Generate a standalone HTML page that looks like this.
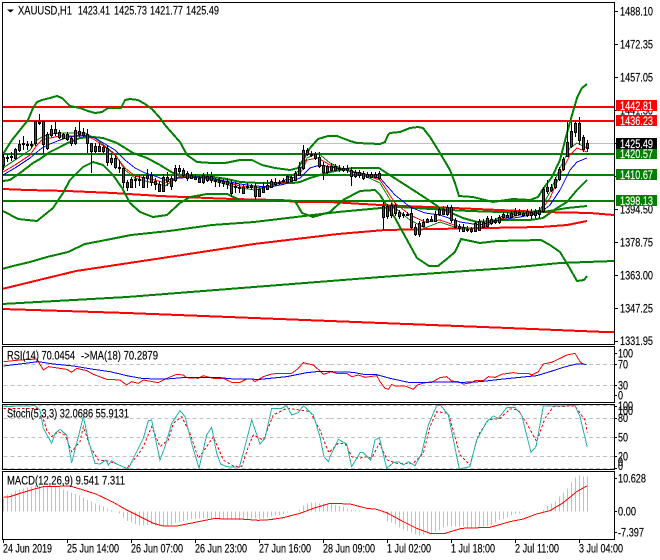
<!DOCTYPE html>
<html><head><meta charset="utf-8"><style>
html,body{margin:0;padding:0;background:#fff;width:660px;height:560px;overflow:hidden}
svg{display:block;font-family:"Liberation Sans",sans-serif;font-size:11.5px}
text{stroke:#000;stroke-width:.15}
.w text{stroke:#fff}
polyline{shape-rendering:crispEdges}
.f{fill:none;stroke:#000;stroke-width:1;shape-rendering:crispEdges}
.g2{fill:none;stroke:#008000;stroke-width:2}
.r2{fill:none;stroke:#f00;stroke-width:2;shape-rendering:crispEdges}
.t{fill:none;stroke-width:1}
.z{fill:none;stroke-width:3}
.d{stroke:#c0c0c0;stroke-width:3;stroke-dasharray:12 9;fill:none;shape-rendering:crispEdges}
</style></head><body>
<svg width="660" height="560" viewBox="0 0 660 560" xmlns="http://www.w3.org/2000/svg">
<rect width="660" height="560" fill="#fff"/>
<defs><clipPath id="m"><rect x="3" y="3" width="611" height="341"/></clipPath></defs>
<g clip-path="url(#m)">
<path d="M3 143.5H614" stroke="#c0c0c0" stroke-width="1" fill="none"/>
<path class="r2" d="M3 107H614M3 121H614"/>
<path class="g2" d="M3 154H614M3 175H614M3 201H614"/>
<polyline class="r2" points="2,309 127,313 254,318 381,323 508,328 605,332 614,332"/>
<polyline class="g2" points="2,304 127,297 254,287 381,277 508,268 560,263 614,261"/>
<polyline class="r2" points="2,289 76,271 169,257 254,244 338,234 385,230 486,228 541,227 567,225 587,221"/>
<polyline class="r2" points="3,189 27,190 67,191 113,193 160,196 207,198 233,199 277,200 297,202 330,202 380,205 477,209 543,212 590,213 614,215"/>
<polyline class="g2" points="2,269 13,266 30,262 47,257 68,252 85,244 106,240 131,235 169,231 212,225 254,222 296,217 338,212 381,208 400,207 430,209 470,211 530,213 543,212 567,208 587,206"/>
<polyline class="g2" points="3,154 12,140 20,130 28,120 33,108 37,102 42,100 50,98 57,96 62,98 70,106 80,108 88,111 95,113 102,112 108,108 115,108 121,108 125,100 130,99 138,100 145,104 152,109 160,118 165,125 172,133 180,142 187,155 197,162 212,163 225,163 240,160 252,160 262,165 275,168 290,170 298,168 303,160 310,148 318,139 328,136 337,136 350,141 357,143 380,144 385,142 388,135 390,133 400,132 410,128 418,127 423,128 430,137 440,153 450,170 455,183 459,196 473,197 493,202 513,199 530,200 538,197 543,189 552,177 560,160 567,133 572,115 577,98 582,88 587,84"/>
<polyline class="g2" points="3,181 10,180 20,173 33,163 40,159 50,152 60,147 70,142 80,138 93,137 103,138 117,143 133,153 147,158 160,165 173,173 187,177 200,177 213,177 227,179 240,182 260,183 280,183 293,183 300,182 310,178 330,172 340,170 353,168 379,168 385,172 410,188 427,199 440,208 463,218 477,222 503,220 530,220 543,218 557,208 567,202 577,190 587,180"/>
<polyline class="g2" points="3,211 18,219 37,221 53,208 63,193 70,180 83,167 93,162 103,165 113,175 122,188 130,203 140,212 153,217 167,215 180,203 190,197 207,194 227,194 240,200 253,201 280,200 295,201 302,213 313,217 330,212 343,200 360,191 375,190 380,195 385,203 395,218 406,238 417,258 429,266 438,266 448,258 455,252 461,239 480,243 497,241 541,240 550,245 560,252 569,267 577,281 584,280 587,276"/>
<polyline class="t" stroke="#008000" points="3,168 15,160 30,150 37,140 42,137 50,134 60,133 72,133 85,133 95,138 105,146 115,154 125,170 135,178 145,181 155,183 165,186 180,176 195,176 210,180 225,184 240,188 255,190 270,186 285,180 300,170 307,158 318,153 330,163 345,170 365,176 380,183 395,208 410,220 425,228 440,222 460,229 480,228 500,217 520,213 540,210 550,192 560,168 570,148 577,143 587,148"/>
<polyline class="t" stroke="#f00" points="3,172 15,165 30,155 37,145 42,140 50,138 60,136 72,136 85,135 95,140 105,147 115,155 125,168 135,176 145,178 155,180 165,183 180,177 195,177 210,179 225,182 240,186 255,188 270,186 285,182 300,174 307,160 318,158 330,165 345,170 365,175 380,180 395,203 410,215 425,222 440,220 460,227 480,229 500,219 520,215 540,212 550,198 560,175 570,155 577,148 587,152"/>
<polyline class="t" stroke="#00f" points="3,175 15,168 30,158 37,152 42,148 50,144 60,140 70,137 80,136 87,136 95,138 105,144 115,150 125,160 135,168 145,173 155,176 165,180 180,178 195,177 210,178 225,181 240,184 255,186 270,187 285,184 300,178 310,168 320,165 330,167 345,170 365,174 380,178 395,195 410,207 425,213 440,215 460,222 480,225 500,220 520,217 540,213 550,205 560,190 570,170 577,162 587,158"/>
<path stroke="#000" stroke-width="1" fill="none" shape-rendering="crispEdges" d="M3.5 154V170M7.5 154V162M11.5 152V161M15.5 148V160M19.5 140V152M23.5 136V150M27.5 141V150M31.5 141V148M35.5 121V146M39.5 114V125M43.5 121V154M47.5 132V150M51.5 125V137M55.5 122V136M59.5 130V139M63.5 133V139M67.5 132V141M71.5 136V146M75.5 127V145M79.5 121V137M83.5 128V137M87.5 129V153M91.5 143V173M95.5 143V153M99.5 143V152M103.5 145V154M107.5 145V166M111.5 153V165M115.5 155V169M119.5 160V173M123.5 168V188M127.5 180V191M131.5 177V188M135.5 176V188M139.5 175V186M143.5 175V187M147.5 169V188M151.5 172V186M155.5 178V190M159.5 181V192M163.5 174V192M167.5 172V186M171.5 176V190M175.5 165V182M179.5 165V174M183.5 168V177M187.5 171V181M191.5 172V179M195.5 174V179M199.5 176V183M203.5 173V184M207.5 172V182M211.5 172V183M215.5 178V187M219.5 177V187M223.5 179V187M227.5 178V189M231.5 180V197M235.5 182V193M239.5 184V193M243.5 185V194M247.5 183V189M251.5 184V190M255.5 183V200M259.5 186V197M263.5 182V193M267.5 180V190M271.5 179V188M275.5 178V186M279.5 180V185M283.5 178V183M287.5 175V183M291.5 175V182M295.5 171V181M299.5 162V176M303.5 145V170M307.5 148V156M311.5 151V157M315.5 152V160M319.5 152V168M323.5 162V180M327.5 165V174M331.5 163V171M335.5 164V171M339.5 165V172M343.5 166V172M347.5 165V173M351.5 167V186M355.5 170V178M359.5 170V178M363.5 171V180M367.5 172V178M371.5 172V178M375.5 172V178M379.5 171V180M383.5 202V230M387.5 204V219M391.5 203V218M395.5 203V216M399.5 210V219M403.5 212V218M407.5 212V216M411.5 207V229M415.5 224V236M419.5 221V237M423.5 219V227M427.5 218V223M431.5 216V222M435.5 211V222M439.5 207V216M443.5 206V215M447.5 205V216M451.5 205V223M455.5 218V229M459.5 224V232M463.5 224V232M467.5 226V232M471.5 227V233M475.5 221V232M479.5 219V231M483.5 219V228M487.5 216V228M491.5 216V225M495.5 218V224M499.5 215V224M503.5 212V219M507.5 212V218M511.5 211V218M515.5 208V216M519.5 209V215M523.5 211V216M527.5 209V217M531.5 209V219M535.5 209V218M539.5 207V218M543.5 187V213M547.5 180V194M551.5 184V192M555.5 177V189M559.5 167V181M563.5 157V171M567.5 122V157M571.5 122V148M575.5 121V137M579.5 117V145M583.5 135V152M587.5 140V152"/>
<path fill="#008000" stroke="#000" stroke-width="1" shape-rendering="crispEdges" d="M2.5 157.5h2v8h-2zM6.5 157.5h2v1h-2zM10.5 156.5h2v1h-2zM14.5 149.5h2v9h-2zM18.5 144.5h2v6h-2zM22.5 143.5h2v1h-2zM26.5 144.5h2v1h-2zM30.5 144.5h2v1h-2zM34.5 121.5h2v22h-2zM38.5 122.5h2v1h-2zM46.5 134.5h2v14h-2zM50.5 129.5h2v6h-2zM54.5 129.5h2v4h-2zM62.5 134.5h2v4h-2zM74.5 130.5h2v13h-2zM78.5 131.5h2v3h-2zM82.5 132.5h2v3h-2zM94.5 146.5h2v5h-2zM110.5 158.5h2v4h-2zM118.5 167.5h2v1h-2zM126.5 182.5h2v5h-2zM130.5 179.5h2v8h-2zM134.5 179.5h2v1h-2zM138.5 179.5h2v1h-2zM142.5 177.5h2v10h-2zM146.5 175.5h2v3h-2zM162.5 177.5h2v14h-2zM170.5 178.5h2v8h-2zM174.5 168.5h2v12h-2zM178.5 168.5h2v3h-2zM190.5 175.5h2v3h-2zM194.5 177.5h2v2h-2zM198.5 178.5h2v4h-2zM202.5 175.5h2v7h-2zM206.5 176.5h2v4h-2zM214.5 180.5h2v1h-2zM218.5 180.5h2v2h-2zM222.5 181.5h2v2h-2zM234.5 186.5h2v1h-2zM238.5 187.5h2v1h-2zM242.5 187.5h2v6h-2zM246.5 186.5h2v1h-2zM250.5 186.5h2v1h-2zM258.5 189.5h2v7h-2zM262.5 187.5h2v5h-2zM266.5 185.5h2v4h-2zM270.5 181.5h2v6h-2zM274.5 182.5h2v2h-2zM278.5 182.5h2v1h-2zM282.5 180.5h2v1h-2zM286.5 176.5h2v6h-2zM290.5 177.5h2v4h-2zM294.5 173.5h2v7h-2zM298.5 167.5h2v8h-2zM302.5 150.5h2v18h-2zM306.5 150.5h2v4h-2zM310.5 154.5h2v1h-2zM326.5 166.5h2v6h-2zM330.5 166.5h2v4h-2zM334.5 166.5h2v4h-2zM338.5 168.5h2v1h-2zM342.5 168.5h2v2h-2zM346.5 168.5h2v2h-2zM354.5 172.5h2v4h-2zM362.5 173.5h2v5h-2zM366.5 174.5h2v3h-2zM370.5 174.5h2v3h-2zM374.5 174.5h2v3h-2zM382.5 206.5h2v11h-2zM390.5 205.5h2v10h-2zM398.5 212.5h2v4h-2zM402.5 214.5h2v1h-2zM406.5 214.5h2v1h-2zM418.5 223.5h2v11h-2zM422.5 222.5h2v4h-2zM426.5 219.5h2v3h-2zM430.5 219.5h2v2h-2zM434.5 214.5h2v7h-2zM438.5 209.5h2v5h-2zM442.5 209.5h2v5h-2zM446.5 207.5h2v7h-2zM466.5 229.5h2v1h-2zM474.5 223.5h2v8h-2zM478.5 221.5h2v9h-2zM482.5 222.5h2v5h-2zM486.5 218.5h2v8h-2zM490.5 219.5h2v4h-2zM494.5 220.5h2v2h-2zM498.5 217.5h2v5h-2zM502.5 214.5h2v3h-2zM506.5 215.5h2v2h-2zM510.5 213.5h2v4h-2zM514.5 211.5h2v4h-2zM518.5 212.5h2v2h-2zM522.5 213.5h2v2h-2zM526.5 211.5h2v4h-2zM530.5 212.5h2v3h-2zM534.5 211.5h2v4h-2zM538.5 210.5h2v4h-2zM542.5 189.5h2v22h-2zM546.5 187.5h2v4h-2zM550.5 187.5h2v3h-2zM554.5 179.5h2v8h-2zM558.5 169.5h2v10h-2zM562.5 159.5h2v10h-2zM566.5 142.5h2v14h-2zM570.5 131.5h2v15h-2zM574.5 123.5h2v9h-2zM586.5 143.5h2v5h-2z"/>
<path fill="#f00" stroke="#000" stroke-width="1" shape-rendering="crispEdges" d="M42.5 121.5h2v23h-2zM58.5 132.5h2v5h-2zM66.5 134.5h2v5h-2zM70.5 138.5h2v5h-2zM86.5 134.5h2v9h-2zM90.5 143.5h2v8h-2zM98.5 146.5h2v5h-2zM102.5 147.5h2v4h-2zM106.5 148.5h2v14h-2zM114.5 158.5h2v9h-2zM122.5 168.5h2v14h-2zM150.5 175.5h2v7h-2zM154.5 181.5h2v3h-2zM158.5 184.5h2v7h-2zM166.5 177.5h2v4h-2zM182.5 170.5h2v5h-2zM186.5 173.5h2v5h-2zM210.5 176.5h2v4h-2zM226.5 181.5h2v3h-2zM230.5 183.5h2v10h-2zM254.5 186.5h2v10h-2zM314.5 154.5h2v4h-2zM318.5 157.5h2v9h-2zM322.5 165.5h2v7h-2zM350.5 170.5h2v6h-2zM358.5 172.5h2v3h-2zM378.5 173.5h2v5h-2zM386.5 206.5h2v10h-2zM394.5 205.5h2v8h-2zM410.5 213.5h2v14h-2zM414.5 227.5h2v7h-2zM450.5 207.5h2v13h-2zM454.5 220.5h2v7h-2zM458.5 226.5h2v2h-2zM462.5 227.5h2v4h-2zM470.5 229.5h2v2h-2zM578.5 123.5h2v17h-2zM582.5 137.5h2v12h-2z"/>
</g>
<g transform="translate(0,340) scale(.33333)">
<path class="d" d="M10 73H990M10 136H990M10 197H990M10 235H990M10 292H990M10 349H990M10 386H990"/>
<polyline class="z" stroke="#f00" points="10,65 60,60 110,57 130,90 145,80 200,88 215,97 230,85 260,92 280,103 320,118 360,120 380,135 395,125 415,130 430,120 475,128 500,115 530,103 550,105 560,113 595,115 610,107 640,115 670,115 695,127 720,127 740,117 755,117 765,125 790,110 815,102 840,100 875,100 895,85 910,68 940,75 960,93 970,103 990,97"/>
<polyline class="z" stroke="#00f" points="10,78 60,72 115,65 160,72 220,78 280,88 330,95 385,108 430,116 500,117 560,112 650,112 700,117 780,118 860,110 920,98 960,94 990,95"/>
<polyline class="z" stroke="#f00" stroke-dasharray="8 6" points="10,205 110,205 125,220 140,270 155,290 175,275 195,285 215,335 240,305 250,260 270,320 295,360 320,362 350,372 380,385 410,350 430,320 455,260 480,320 505,300 520,250 545,230 570,280 595,355 620,320 640,290 670,360 700,378 725,380 745,320 760,285 790,300 820,225 860,205 900,210 930,215 960,270 985,335 990,335"/>
<polyline class="z" stroke="#20b2aa" points="10,200 60,198 105,197 120,210 130,265 155,310 165,280 180,268 200,285 215,368 235,290 250,230 265,300 285,370 300,372 318,360 325,375 335,362 350,372 385,387 400,355 430,295 445,242 455,240 465,290 480,360 495,320 515,250 540,212 555,230 575,310 597,385 620,285 635,262 650,340 662,372 680,380 718,382 735,320 755,240 780,312 795,295 815,205 845,205 860,197 875,225 895,218 910,197 940,225 960,290 972,350 985,365 990,350"/>
<path stroke="#c0c0c0" stroke-width="3" fill="none" shape-rendering="crispEdges" d="M10 514V475M22 514V463M34 514V460M46 514V452M58 514V448M70 514V445M82 514V443M94 514V440M106 514V437M118 514V437M130 514V437M142 514V437M154 514V440M166 514V440M178 514V443M190 514V448M202 514V453M214 514V458M226 514V462M238 514V467M250 514V473M262 514V480M274 514V485M286 514V490M298 514V495M310 514V500M322 514V505M334 514V510M358 514V520M370 514V532M382 514V543M394 514V547M406 514V552M418 514V557M430 514V557M442 514V555M454 514V553M466 514V557M478 514V558M490 514V557M502 514V557M514 514V553M526 514V548M538 514V545M550 514V543M562 514V540M574 514V537M586 514V537M598 514V535M610 514V535M622 514V535M634 514V535M646 514V535M658 514V538M670 514V538M682 514V537M694 514V537M706 514V538M718 514V540M730 514V538M742 514V537M754 514V535M766 514V535M778 514V537M790 514V535M802 514V533M814 514V530M826 514V527M838 514V525M850 514V522M862 514V518M898 514V508M910 514V497M922 514V490M934 514V487M946 514V487M958 514V490M970 514V490M982 514V490"/>
<polyline class="z" stroke="#f00" points="10,472 30,470 60,460 100,448 130,440 210,438 250,450 290,463 340,487 380,510 420,530 460,550 490,558 530,558 570,550 640,536 720,537 775,541 810,539 850,533 900,520 940,505 990,490"/>
</g>
<g transform="translate(330,340) scale(.33333)">
<path class="d" d="M0 73H852M0 136H852M0 197H852M0 235H852M0 292H852M0 349H852M0 386H852"/>
<polyline class="z" stroke="#f00" points="0,95 20,100 50,100 65,110 85,105 105,112 140,107 150,125 165,145 175,148 185,133 195,138 225,138 250,148 262,135 285,128 305,127 330,113 350,110 365,123 385,125 400,132 425,128 435,122 460,122 475,110 495,112 515,103 550,98 565,100 595,100 605,105 625,95 640,72 665,67 690,55 710,45 735,40 750,65 760,73"/>
<polyline class="z" stroke="#00f" points="0,95 70,97 100,103 140,104 180,115 240,128 330,126 400,127 450,125 520,117 620,107 660,95 700,82 740,72 770,73"/>
<polyline class="z" stroke="#f00" stroke-dasharray="8 6" points="0,335 25,310 45,310 65,350 85,355 110,350 125,355 148,310 172,360 200,370 250,370 280,340 300,260 320,215 355,220 390,345 420,375 445,285 475,240 510,235 540,207 565,210 590,250 620,305 645,235 670,200 735,198 765,240 772,278"/>
<polyline class="z" stroke="#20b2aa" points="0,350 25,298 50,312 65,380 90,338 100,338 122,360 135,300 148,293 170,385 190,368 205,365 220,375 235,365 255,377 275,340 295,255 320,197 333,197 355,225 388,387 420,380 440,300 470,245 490,228 505,235 530,203 555,203 575,225 603,337 618,320 640,198 735,197 750,230 772,322"/>
<path stroke="#c0c0c0" stroke-width="3" fill="none" shape-rendering="crispEdges" d="M5 514V492M17 514V495M29 514V498M41 514V500M53 514V505M65 514V508M77 514V510M89 514V512M160 514V520M172 514V543M184 514V548M196 514V553M208 514V562M220 514V568M232 514V573M244 514V577M256 514V583M268 514V587M280 514V583M292 514V580M304 514V578M316 514V575M328 514V570M340 514V562M352 514V558M364 514V560M376 514V560M388 514V560M400 514V560M412 514V562M424 514V562M436 514V562M448 514V560M460 514V558M472 514V558M484 514V555M496 514V548M508 514V540M520 514V537M532 514V532M544 514V527M556 514V522M568 514V520M580 514V517M640 514V510M652 514V498M664 514V490M676 514V484M688 514V470M700 514V458M712 514V445M724 514V428M736 514V413M748 514V407M760 514V410M772 514V410"/>
<polyline class="z" stroke="#f00" points="0,490 60,492 110,505 140,508 170,518 220,545 260,565 300,580 345,580 395,565 480,562 540,545 580,537 620,522 660,512 700,488 740,455 770,438"/>
</g>
<path class="f" d="M2.5 2.5H614.5V344.5H2.5ZM2.5 346.5H614.5V402.5H2.5ZM2.5 404.5H614.5V469.5H2.5ZM2.5 471.5H614.5V539.5H2.5Z"/>
<path class="f" d="M614 11.5h4M614 44.5h4M614 77.5h4M614 110.5h4M614 143.5h4M614 176.5h4M614 209.5h4M614 242.5h4M614 275.5h4M614 308.5h4M614 341.5h4M614 353.5h3M614 364.5h3M614 385.5h3M614 395.5h3M614 406.5h3M614 418.5h3M614 437.5h3M614 456.5h3M614 468.5h3M614 478.5h3M614 511.5h3M614 532.5h3"/>
<path class="f" d="M3.5 539v4M67.5 539v4M131.5 539v4M195.5 539v4M259.5 539v4M323.5 539v4M387.5 539v4M451.5 539v4M515.5 539v4M579.5 539v4"/>
<path d="M7 9.5h7l-3.5 3z" fill="#000"/>
<g fill="#000">
<text x="18" y="14.5" textLength="54" lengthAdjust="spacingAndGlyphs">XAUUSD,H1</text>
<text x="78" y="14.5" textLength="32" lengthAdjust="spacingAndGlyphs">1423.41</text>
<text x="114" y="14.5" textLength="33" lengthAdjust="spacingAndGlyphs">1425.73</text>
<text x="150" y="14.5" textLength="33" lengthAdjust="spacingAndGlyphs">1421.77</text>
<text x="186" y="14.5" textLength="33" lengthAdjust="spacingAndGlyphs">1425.49</text>
<text x="7" y="359.5" textLength="68" lengthAdjust="spacingAndGlyphs">RSI(14) 70.0454</text>
<text x="81" y="359.5" textLength="77" lengthAdjust="spacingAndGlyphs">-&gt;MA(18) 70.2879</text>
<text x="7" y="417.5" textLength="122" lengthAdjust="spacingAndGlyphs">Stoch(5,3,3) 32.0686 55.9131</text>
<text x="7" y="484.5" textLength="118" lengthAdjust="spacingAndGlyphs">MACD(12,26,9) 9.541 7.311</text>
<text x="620" y="15.5" textLength="33" lengthAdjust="spacingAndGlyphs">1488.10</text>
<text x="620" y="48.5" textLength="33" lengthAdjust="spacingAndGlyphs">1472.35</text>
<text x="620" y="81.5" textLength="33" lengthAdjust="spacingAndGlyphs">1457.05</text>
<text x="620" y="114.5" textLength="33" lengthAdjust="spacingAndGlyphs">1441.30</text>
<text x="620" y="213.5" textLength="33" lengthAdjust="spacingAndGlyphs">1394.50</text>
<text x="620" y="246.5" textLength="33" lengthAdjust="spacingAndGlyphs">1378.75</text>
<text x="620" y="279.5" textLength="33" lengthAdjust="spacingAndGlyphs">1363.00</text>
<text x="620" y="312.5" textLength="33" lengthAdjust="spacingAndGlyphs">1347.25</text>
<text x="620" y="345" textLength="33" lengthAdjust="spacingAndGlyphs">1331.95</text>
<text x="618" y="357.5" textLength="15" lengthAdjust="spacingAndGlyphs">100</text>
<text x="618" y="368.5" textLength="10" lengthAdjust="spacingAndGlyphs">70</text>
<text x="618" y="389.5" textLength="10" lengthAdjust="spacingAndGlyphs">30</text>
<text x="618" y="399.5" textLength="5" lengthAdjust="spacingAndGlyphs">0</text>
<text x="618" y="410" textLength="15" lengthAdjust="spacingAndGlyphs">100</text>
<text x="618" y="415" textLength="15" lengthAdjust="spacingAndGlyphs">100</text>
<text x="618" y="422" textLength="10" lengthAdjust="spacingAndGlyphs">80</text>
<text x="618" y="441.5" textLength="10" lengthAdjust="spacingAndGlyphs">50</text>
<text x="618" y="460.5" textLength="10" lengthAdjust="spacingAndGlyphs">20</text>
<text x="618" y="466" textLength="5" lengthAdjust="spacingAndGlyphs">0</text>
<text x="618" y="470" textLength="5" lengthAdjust="spacingAndGlyphs">0</text>
<text x="618" y="482.5" textLength="28" lengthAdjust="spacingAndGlyphs">10.628</text>
<text x="618" y="515.5" textLength="18" lengthAdjust="spacingAndGlyphs">0.00</text>
<text x="618" y="536.5" textLength="26" lengthAdjust="spacingAndGlyphs">-7.397</text>
<text x="3" y="552.5" textLength="49" lengthAdjust="spacingAndGlyphs">24 Jun 2019</text>
<text x="67" y="552.5" textLength="52" lengthAdjust="spacingAndGlyphs">25 Jun 14:00</text>
<text x="131" y="552.5" textLength="52" lengthAdjust="spacingAndGlyphs">26 Jun 07:00</text>
<text x="195" y="552.5" textLength="52" lengthAdjust="spacingAndGlyphs">26 Jun 23:00</text>
<text x="259" y="552.5" textLength="52" lengthAdjust="spacingAndGlyphs">27 Jun 16:00</text>
<text x="323" y="552.5" textLength="52" lengthAdjust="spacingAndGlyphs">28 Jun 09:00</text>
<text x="387" y="552.5" textLength="44" lengthAdjust="spacingAndGlyphs">1 Jul 02:00</text>
<text x="451" y="552.5" textLength="44" lengthAdjust="spacingAndGlyphs">1 Jul 18:00</text>
<text x="515" y="552.5" textLength="44" lengthAdjust="spacingAndGlyphs">2 Jul 11:00</text>
<text x="579" y="552.5" textLength="44" lengthAdjust="spacingAndGlyphs">3 Jul 04:00</text>
</g>
<rect x="616" y="100" width="41" height="11" fill="#f00"/>
<rect x="616" y="115" width="41" height="11" fill="#f00"/>
<rect x="616" y="138" width="41" height="11" fill="#000"/>
<rect x="616" y="149" width="41" height="10" fill="#008000"/>
<rect x="616" y="169" width="41" height="11" fill="#008000"/>
<rect x="616" y="195" width="41" height="11" fill="#008000"/>
<g fill="#fff" class="w">
<text x="620" y="110" textLength="33" lengthAdjust="spacingAndGlyphs">1442.81</text>
<text x="620" y="125" textLength="33" lengthAdjust="spacingAndGlyphs">1436.23</text>
<text x="620" y="148" textLength="33" lengthAdjust="spacingAndGlyphs">1425.49</text>
<text x="620" y="158" textLength="33" lengthAdjust="spacingAndGlyphs">1420.57</text>
<text x="620" y="179" textLength="33" lengthAdjust="spacingAndGlyphs">1410.67</text>
<text x="620" y="205" textLength="33" lengthAdjust="spacingAndGlyphs">1398.13</text>
</g>
</svg>
</body></html>
